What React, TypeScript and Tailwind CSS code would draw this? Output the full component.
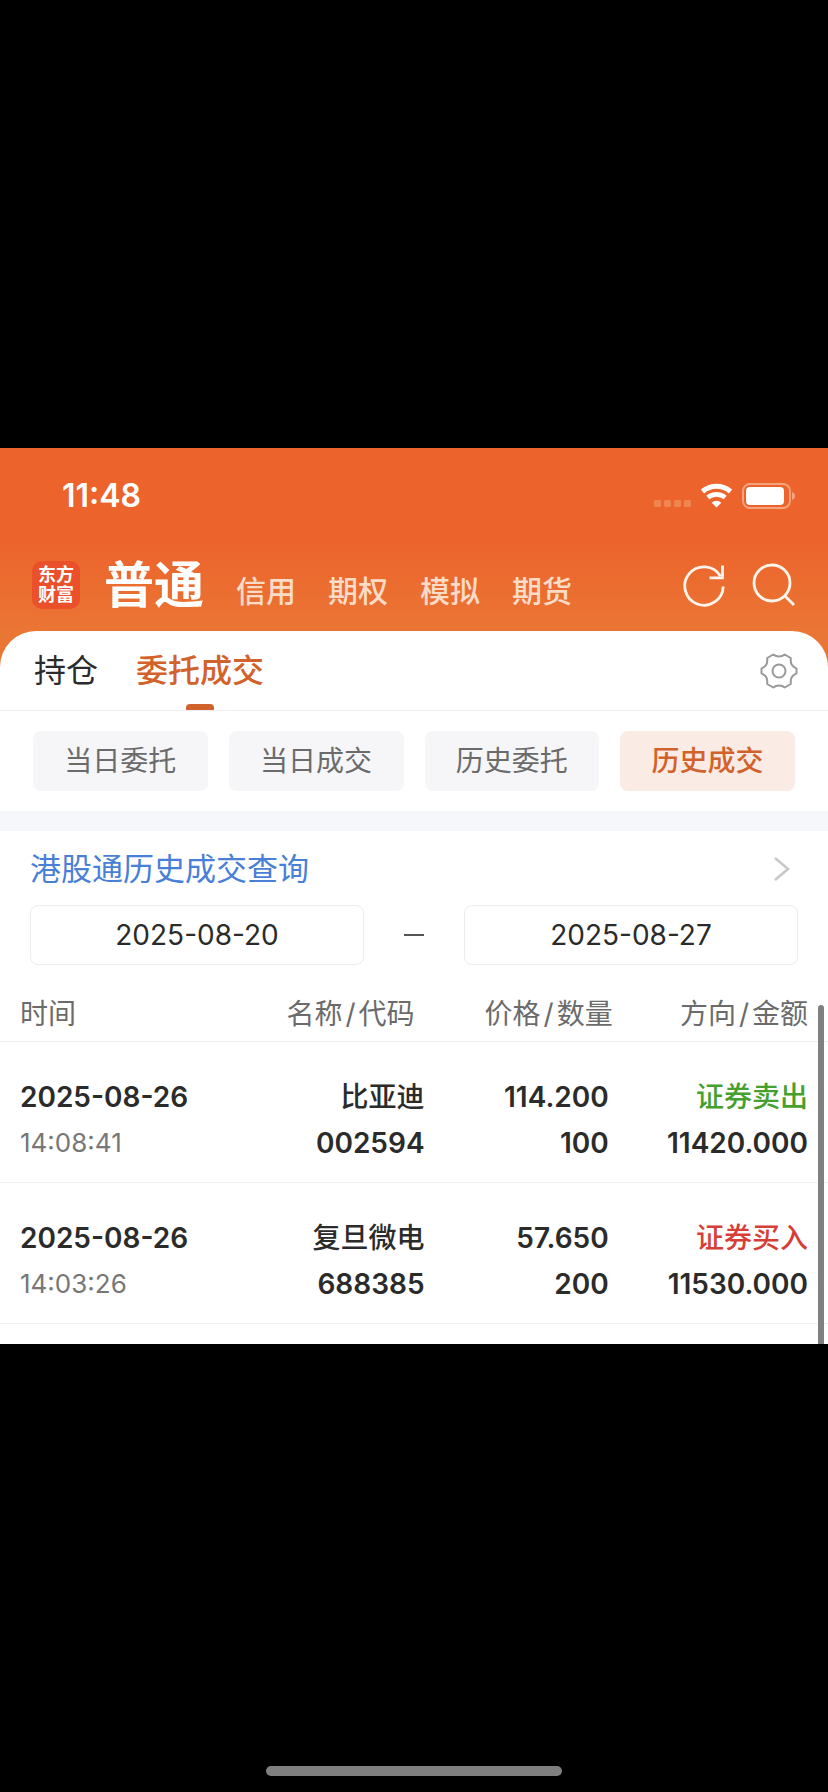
import React, { useState } from 'react';

interface Trade {
  id: string;
  date: string;
  time: string;
  name: string;
  code: string;
  price: string;
  amount: string;
  side: 'buy' | 'sell';
  total: string;
}

const ACCOUNTS = ['信用', '期权', '模拟', '期货'];
const FILTERS = ['当日委托', '当日成交', '历史委托', '历史成交'];

const TRADES: Trade[] = [
  { id: '1', date: '2025-08-26', time: '14:08:41', name: '比亚迪', code: '002594', price: '114.200', amount: '100', side: 'sell', total: '11420.000' },
  { id: '2', date: '2025-08-26', time: '14:03:26', name: '复旦微电', code: '688385', price: '57.650', amount: '200', side: 'buy', total: '11530.000' }
];

const StatusBar = () => (
  <div className="flex h-24 items-center justify-between pr-8 pl-[62px]">
    <span className="text-[32px] leading-10 font-semibold">11:48</span>
    <svg width="144" height="28" viewBox="0 0 144 28" fill="none">
      <g fill="#f18551">
        <rect x="2" y="18" width="7" height="7" rx="1.5" />
        <rect x="12" y="18" width="7" height="7" rx="1.5" />
        <rect x="22" y="18" width="7" height="7" rx="1.5" />
        <rect x="32" y="18" width="7" height="7" rx="1.5" />
      </g>
      <path d="M50.5 9.5a21.5 21.5 0 0 1 28 0" stroke="#fff" strokeWidth="5" />
      <path d="M55.800 15.600a13.500 13.500 0 0 1 17.400 0" stroke="#fff" strokeWidth="4.600" />
      <path d="M64.5 25.500l-4.800-4.800a7 7 0 0 1 9.600 0z" fill="#fff" />
      <rect x="91" y="2" width="47" height="24" rx="7" stroke="#f5a27d" strokeWidth="2" />
      <rect x="94" y="5" width="38" height="18" rx="4" fill="#fff" />
      <path d="M140 10c4 1 4 7 0 8z" fill="#f5a27d" />
    </svg>
  </div>
);

const Logo = () => (
  <div className="flex h-12 w-12 flex-col items-center justify-center rounded-[10px] bg-[#ea5029] text-lg leading-5 font-bold">
    <span>东方</span>
    <span>财富</span>
  </div>
);

const RefreshIcon = () => (
  <svg width="44" height="44" viewBox="0 0 44 44" fill="none" stroke="#fff5ec" strokeWidth="2.8">
    <path d="M41.200 23.500A19.200 19.200 0 1 1 38.500 13.200" />
    <path d="M40.500 2.500V14.800H27.500" />
  </svg>
);

const SearchIcon = () => (
  <svg width="44" height="44" viewBox="0 0 44 44" fill="none" stroke="#fff5ec" strokeWidth="2.8">
    <circle cx="20" cy="20" r="18" />
    <path d="M33 33l9 9" />
  </svg>
);

const GearIcon = () => (
  <svg width="38" height="38" viewBox="0 0 38 38" fill="none" stroke="#999" strokeWidth="2" strokeLinejoin="round">
    <path d="M13.3 2.500C15 3.900 17 4.500 19 4.500S23 3.900 24.700 2.500L30.800 6C30.300 12 31.500 14 36.500 16.600V21.400C31.500 24 30.300 26 30.800 32L24.700 35.500C23 34.100 21 33.500 19 33.500S15 34.100 13.300 35.500L7.200 32C7.700 26 6.500 24 1.500 21.400V16.600C6.500 14 7.700 12 7.200 6Z" />
    <circle cx="19" cy="19" r="6.500" />
  </svg>
);

const PairHeading = ({ first, second }: { first: string; second: string }) => (
  <>
    {first}
    <span className="mx-[3px]">/</span>
    {second}
  </>
);

export default function App() {
  const [filter, setFilter] = useState('历史成交');
  const [from, setFrom] = useState('2025-08-20');
  const [to, setTo] = useState('2025-08-27');

  return (
    <div className="relative flex min-h-screen flex-col justify-center bg-black font-['Inter','Noto_Sans_CJK_SC',sans-serif]">
      <div className="bg-linear-to-b from-[#ec632b] from-10% to-[#ea7635] to-21% text-white">
        <StatusBar />

        <header className="flex h-[87px] items-center pr-8 pb-1.5 pl-8">
          <Logo />
          <nav className="ml-6 flex items-end gap-8">
            <button className="text-[50px] leading-14 font-bold">普通</button>
            {ACCOUNTS.map(name => (
              <button key={name} className="text-[30px] leading-11 font-medium text-[#fbdcc8]">
                {name}
              </button>
            ))}
          </nav>
          <div className="ml-auto flex items-center gap-[26px]">
            <button aria-label="刷新"><RefreshIcon /></button>
            <button aria-label="搜索"><SearchIcon /></button>
          </div>
        </header>

        <main className="rounded-t-[36px] bg-white text-[#2b2b2b]">
          <div className="flex h-20 items-stretch gap-[38px] border-b border-[#eeeff1] pr-[30px] pl-[34px]">
            <button className="text-[32px]">持仓</button>
            <button className="relative text-[32px] font-medium text-[#d2622b]">
              委托成交
              <span className="absolute bottom-0 left-1/2 h-1.5 w-7 -translate-x-1/2 rounded-t-sm bg-[#d2622b]" />
            </button>
            <button aria-label="设置" className="ml-auto"><GearIcon /></button>
          </div>

          <div className="grid grid-cols-4 gap-[21px] px-[33px] py-5">
            {FILTERS.map(name => (
              <button
                key={name}
                onClick={() => setFilter(name)}
                className={`h-[60px] rounded-lg text-[28px] ${
                  filter === name ? 'bg-[#faece5] font-medium text-[#d2622b]' : 'bg-[#f6f6f9] text-[#6b6b6b]'
                }`}
              >
                {name}
              </button>
            ))}
          </div>

          <div className="h-5 bg-[#f6f7fa]" />

          <a href="#hk" className="flex h-[74px] items-center justify-between pt-0.5 pr-9 pl-[30px] text-[31px] text-[#4a7fd6]">
            港股通历史成交查询
            <svg width="20" height="28" viewBox="0 0 20 28" fill="none" stroke="#c8c8c8" strokeWidth="2.6">
              <path d="M3 3l13 11L3 25" />
            </svg>
          </a>

          <div className="flex items-center px-[30px]">
            <input
              aria-label="开始日期"
              value={from}
              onChange={e => setFrom(e.target.value)}
              className="h-[60px] min-w-0 flex-1 rounded-lg border border-[#ececec] text-center text-[28px]"
            />
            <span className="mx-10 h-0.5 w-5 bg-[#555]" />
            <input
              aria-label="结束日期"
              value={to}
              onChange={e => setTo(e.target.value)}
              className="h-[60px] min-w-0 flex-1 rounded-lg border border-[#ececec] text-center text-[28px]"
            />
          </div>

          <div className="relative pt-5 pb-5">
            <table className="w-full table-fixed text-right text-[28px]">
              <thead>
                <tr className="h-14 border-b border-[#eeeff1] text-[#6b6b6b]">
                  <th className="w-[28%] pt-0.5 pl-5 text-left font-normal">时间</th>
                  <th className="w-[24%] pt-0.5 pr-4 font-normal"><PairHeading first="名称" second="代码" /></th>
                  <th className="w-[22%] pt-0.5 font-normal"><PairHeading first="价格" second="数量" /></th>
                  <th className="w-[26%] pt-0.5 pr-5 font-normal"><PairHeading first="方向" second="金额" /></th>
                </tr>
              </thead>
              <tbody>
                {TRADES.map(trade => (
                  <tr key={trade.id} className="border-b border-[#f2f3f4] leading-[46px] font-semibold">
                    <td className="pt-8 pb-4 pl-5 text-left">
                      <div>{trade.date}</div>
                      <div className="text-[26px] font-normal text-[#777]">{trade.time}</div>
                    </td>
                    <td className="pt-8 pr-1.5 pb-4">
                      <div className="font-medium">{trade.name}</div>
                      <div>{trade.code}</div>
                    </td>
                    <td className="pt-8 pr-1 pb-4">
                      <div>{trade.price}</div>
                      <div>{trade.amount}</div>
                    </td>
                    <td className="pt-8 pr-5 pb-4">
                      <div className={trade.side === 'sell' ? 'font-medium text-[#46a02d]' : 'font-medium text-[#d63f38]'}>
                        {trade.side === 'sell' ? '证券卖出' : '证券买入'}
                      </div>
                      <div>{trade.total}</div>
                    </td>
                  </tr>
                ))}
              </tbody>
            </table>
            {/* scroll thumb */}
            <div className="absolute top-10 right-1 bottom-0 w-1.5 rounded-t-full bg-[#808080]" />
          </div>
        </main>
      </div>

      {/* home indicator */}
      <div className="absolute bottom-4 left-1/2 h-2.5 w-[296px] -translate-x-1/2 rounded-full bg-[#7f7f7f]" />
    </div>
  );
}
